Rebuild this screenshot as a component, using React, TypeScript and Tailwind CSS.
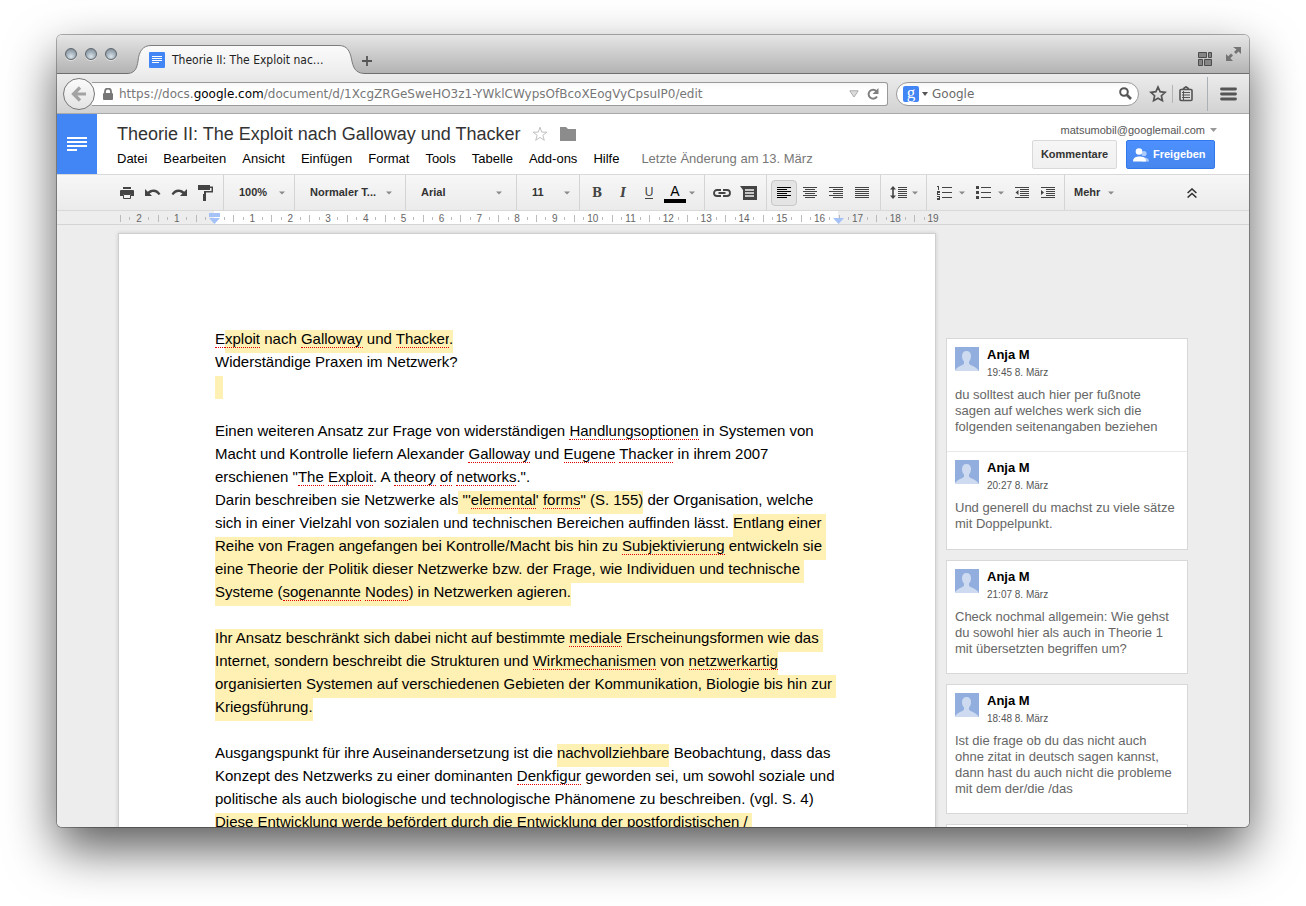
import React from "react";

type Run = { t: string; hl?: boolean; sp?: boolean };

const p = (t: string): Run => ({ t });
const s = (t: string): Run => ({ t, sp: true });
const h = (t: string): Run => ({ t, hl: true });
const hs = (t: string): Run => ({ t, hl: true, sp: true });

const documentLines: Run[][] = [
  [s("E"), hs("xploit"), h(" nach "), hs("Galloway"), h(" und "), hs("Thacker"), h(".")],
  [p("Widerständige Praxen im Netzwerk?")],
  [h("  ")],
  [],
  [p("Einen weiteren Ansatz zur Frage von widerständigen "), s("Handlungsoptionen"), p(" in Systemen von")],
  [p("Macht und Kontrolle liefern Alexander "), s("Galloway"), p(" und "), s("Eugene"), p(" "), s("Thacker"), p(" in ihrem 2007")],
  [p('erschienen "'), s("The"), p(" "), s("Exploit"), p(". A "), s("theory"), p(" "), s("of"), p(" "), s("networks"), p('.".')],
  [p("Darin beschreiben sie Netzwerke als"), h(' "\''), hs("elemental"), h("' "), hs("forms"), h('" (S. 155)'), p(" der Organisation, welche")],
  [p("sich in einer Vielzahl von sozialen und technischen Bereichen auffinden lässt. "), h("Entlang einer ")],
  [h("Reihe von Fragen angefangen bei Kontrolle/Macht bis hin zu "), hs("Subjektivierung"), h(" entwickeln sie ")],
  [h("eine Theorie der Politik dieser Netzwerke bzw. der Frage, wie Individuen und technische ")],
  [h("Systeme ("), hs("sogenannte"), h(" "), hs("Nodes"), h(") in Netzwerken agieren.")],
  [],
  [h("Ihr Ansatz beschränkt sich dabei nicht auf bestimmte "), hs("mediale"), h(" Erscheinungsformen wie das ")],
  [h("Internet, sondern beschreibt die Strukturen und "), hs("Wirkmechanismen"), h(" von "), hs("netzwerkartig")],
  [h("organisierten Systemen auf verschiedenen Gebieten der Kommunikation, Biologie bis hin zur ")],
  [h("Kriegsführung.")],
  [],
  [p("Ausgangspunkt für ihre Auseinandersetzung ist die "), h("nachvollziehbare"), p(" Beobachtung, dass das")],
  [p("Konzept des Netzwerks zu einer dominanten "), s("Denkfigur"), p(" geworden sei, um sowohl soziale und")],
  [p("politische als auch biologische und technologische Phänomene zu beschreiben. (vgl. S. 4)")],
  [h("Diese Entwicklung werde befördert durch die Entwicklung der postfordistischen / ")],
];

const threads = [
  [
    { time: "19:45 8. März", lines: ["du solltest auch hier per fußnote", "sagen auf welches werk sich die", "folgenden seitenangaben beziehen"] },
    { time: "20:27 8. März", lines: ["Und generell du machst zu viele sätze", "mit Doppelpunkt."] },
  ],
  [{ time: "21:07 8. März", lines: ["Check nochmal allgemein: Wie gehst", "du sowohl hier als auch in Theorie 1", "mit übersetzten begriffen um?"] }],
  [{ time: "18:48 8. März", lines: ["Ist die frage ob du das nicht auch", "ohne zitat in deutsch sagen kannst,", "dann hast du auch nicht die probleme", "mit dem der/die /das"] }],
];

const menus = ["Datei", "Bearbeiten", "Ansicht", "Einfügen", "Format", "Tools", "Tabelle", "Add-ons", "Hilfe"];

function Caret() {
  return (
    <svg className="h-[4px] w-[6px] shrink-0" viewBox="0 0 6 4" aria-hidden="true">
      <path d="M0 .5h6L3 3.5z" fill="#8a8a8a" />
    </svg>
  );
}

function Tool({ label, active, children }: { label: string; active?: boolean; children: React.ReactNode }) {
  return (
    <button
      type="button"
      aria-label={label}
      className={
        active
          ? "flex h-[26px] w-[26px] shrink-0 items-center justify-center rounded-sm border border-[#c8c8c8] bg-[#e4e4e4] text-black"
          : "flex h-[26px] w-[26px] shrink-0 items-center justify-center text-[#444]"
      }
    >
      {children}
    </button>
  );
}

function MenuCaret({ label }: { label: string }) {
  return (
    <button type="button" aria-label={label} className="flex h-[26px] w-2 shrink-0 items-center justify-center">
      <Caret />
    </button>
  );
}

function Pick({ label, value, className }: { label: string; value: string; className: string }) {
  return (
    <label className={`flex shrink-0 items-center border-r border-[#d4d4d4] pl-[15px] ${className}`}>
      <select
        aria-label={label}
        className="min-w-0 flex-1 appearance-none bg-transparent text-[11px] font-bold text-[#333] outline-none"
      >
        <option>{value}</option>
      </select>
      <Caret />
    </label>
  );
}

function Bars({ rows }: { rows: [number, number][] }) {
  return (
    <svg width="14" height="12" viewBox="0 0 14 12" aria-hidden="true" shapeRendering="crispEdges">
      {rows.map(([x, w], i) => (
        <rect key={i} x={x} y={i * 2} width={w} height="1" fill="currentColor" />
      ))}
    </svg>
  );
}

function TitleBar() {
  return (
    <div className="flex h-[39px] shrink-0 items-start border-b border-[#6e6e6e] bg-linear-to-b from-[#e6e6e6] to-[#b3b3b3]">
      <div className="flex gap-2 pt-[13px] pl-2">
        {["Schließen", "Minimieren", "Zoomen"].map((name) => (
          <button
            key={name}
            type="button"
            aria-label={name}
            className="h-3 w-3 rounded-full border border-[#5f676e] bg-[radial-gradient(circle_at_50%_75%,#dbe4ea_0%,#a3b0ba_50%,#74808a_100%)] shadow-[0_1px_0_rgba(255,255,255,0.5)]"
          />
        ))}
      </div>
      <div className="relative mt-[10px] ml-[11px] flex h-[30px] w-[236px] items-center pl-[21px]">
        <svg className="absolute inset-0" width="236" height="30" viewBox="0 0 236 30" aria-hidden="true">
          <defs>
            <linearGradient id="tab" x1="0" y1="0" x2="0" y2="1">
              <stop offset="0" stopColor="#fbfbfb" />
              <stop offset="1" stopColor="#ececec" />
            </linearGradient>
          </defs>
          <path
            d="M0 30V28.500C7 28 9 23 10 16C11 6 15 .5 23 .5H211C219 .5 222 6 223.500 14C225 22 227 28 236 28.500V30Z"
            fill="url(#tab)"
          />
          <path
            d="M0 28.500C7 28 9 23 10 16C11 6 15 .5 23 .5H211C219 .5 222 6 223.500 14C225 22 227 28 236 28.500"
            fill="none"
            stroke="#7c7c7c"
          />
        </svg>
        <svg className="relative" width="16" height="16" viewBox="0 0 16 16" aria-hidden="true">
          <rect width="16" height="16" rx="1" fill="#4285f4" />
          <path d="M3 4.500h10M3 6.500h10M3 8.500h10M3 10.500h7" stroke="#fff" />
        </svg>
        <span className="relative ml-[7px] font-['DejaVu_Sans_Condensed','DejaVu_Sans',sans-serif] text-[12px] font-stretch-normal text-[#222]">
          Theorie II: The Exploit nac…
        </span>
      </div>
      <button type="button" aria-label="Neuer Tab" className="mt-5 -ml-[3px] text-[#555]">
        <svg width="12" height="12" viewBox="0 0 12 12">
          <path d="M6 1v10M1 6h10" stroke="currentColor" strokeWidth="1.800" />
        </svg>
      </button>
      <div className="ml-auto flex items-start gap-[14px] pt-3 pr-2">
        <button type="button" aria-label="Tab-Gruppen" className="mt-[5px]">
          <svg width="14" height="14" viewBox="0 0 14 14" fill="#858585" stroke="#4c4c4c">
            <path d="M.5.500h8v5h-8zM10.500.500h3v5h-3zM.5 7.500h4v6h-4zM6.500 7.500h7v6h-7z" />
          </svg>
        </button>
        <button type="button" aria-label="Vollbild">
          <svg width="15" height="15" viewBox="0 0 15 15" fill="#747474">
            <path d="M7 0h8v7l-2.500-2.500L10 7 8 5l2.500-2.500zM0 7l2.200 2.200L5 6.500l2 2-2.700 2.800L7 14H0z" />
          </svg>
        </button>
      </div>
    </div>
  );
}

function NavigationBar() {
  return (
    <div className="flex h-10 shrink-0 items-center border-b border-[#a9a9a9] bg-linear-to-b from-[#ececec] to-[#d2d2d2] font-['DejaVu_Sans',sans-serif]">
      <button
        type="button"
        aria-label="Zurück"
        className="relative ml-[6px] flex h-8 w-8 shrink-0 items-center justify-center rounded-full border border-[#777] bg-linear-to-b from-[#fbfbfb] to-[#e3e3e3]"
      >
        <svg width="16" height="16" viewBox="0 0 16 16" fill="none" stroke="#a3a3a3" strokeWidth="3.200">
          <path d="M9 1.500L2.500 8 9 14.500M3 8h12" />
        </svg>
      </button>
      <div className="-ml-[3px] flex h-6 min-w-0 flex-1 items-center rounded-r-[3px] border border-l-0 border-[#999] bg-linear-to-b from-[#f7f7f7] to-white to-30% pl-[11px]">
        <svg width="10" height="12" viewBox="0 0 10 12" className="shrink-0" aria-hidden="true">
          <path d="M2 6V3.500a3 3 0 0 1 6 0V6" fill="none" stroke="#777" strokeWidth="1.800" />
          <rect y="5" width="10" height="7" rx="1" fill="#777" />
        </svg>
        <div
          role="textbox"
          aria-label="Adresse"
          contentEditable
          suppressContentEditableWarning
          spellCheck={false}
          className="ml-[6px] min-w-0 flex-1 overflow-hidden text-[12px] whitespace-nowrap text-[#777] outline-none"
        >
          https://docs.<span className="text-black">google.com</span>
          /document/d/1XcgZRGeSweHO3z1-YWklCWypsOfBcoXEogVyCpsuIP0/edit
        </div>
        <button type="button" aria-label="Verlauf" className="mr-2">
          <svg width="10" height="8" viewBox="0 0 10 8">
            <path d="M.8.800h8.400L5 7z" fill="#ddd" stroke="#aaa" />
          </svg>
        </button>
        <button type="button" aria-label="Neu laden" className="mr-2">
          <svg width="12" height="12" viewBox="0 0 12 12">
            <path d="M9.500 3.200A4.500 4.500 0 1 0 10 8.500" fill="none" stroke="#808080" strokeWidth="2" />
            <path d="M11.500 0v6h-6z" fill="#808080" />
          </svg>
        </button>
      </div>
      <div className="ml-2 flex h-6 w-[243px] shrink-0 items-center rounded-full border border-[#999] bg-linear-to-b from-[#f7f7f7] to-white to-30% px-[6px]">
        <span className="flex h-4 w-4 items-center justify-center rounded-[2px] bg-[#4285f4] pb-[3px] font-['Liberation_Serif',serif] text-[17px] leading-none text-white">
          g
        </span>
        <svg width="6" height="4" viewBox="0 0 6 4" className="mr-[4px] ml-[3px]" aria-hidden="true">
          <path d="M0 0h6L3 4z" fill="#555" />
        </svg>
        <input
          aria-label="Suche"
          placeholder="Google"
          className="min-w-0 flex-1 bg-transparent text-[12px] outline-none placeholder:text-[#6b6b6b]"
        />
        <button type="button" aria-label="Suchen">
          <svg width="13" height="13" viewBox="0 0 13 13" fill="none" stroke="#555">
            <circle cx="5" cy="5" r="3.800" strokeWidth="2" />
            <path d="M8 8l4 4" strokeWidth="2.600" />
          </svg>
        </button>
      </div>
      <button type="button" aria-label="Lesezeichen" className="ml-[10px]">
        <svg width="18" height="18" viewBox="0 0 18 18">
          <path d="M9 2l2.100 4.700 5 .6-3.700 3.400 1 5L9 13.200l-4.400 2.500 1-5L1.900 7.300l5-.6z" fill="none" stroke="#555" strokeWidth="1.700" />
        </svg>
      </button>
      <span className="mx-[5px] h-[18px] w-px bg-[#b4b4b4]" />
      <button type="button" aria-label="Leseliste">
        <svg width="16" height="16" viewBox="0 0 16 16" fill="none" stroke="#555">
          <path d="M5 3L8 .8 11 3" strokeWidth="1.600" />
          <rect x="2" y="3.500" width="12" height="11" rx="1" strokeWidth="1.600" />
          <path d="M4 6.500h8M4 9h8M4 11.500h8M5.500 5v9" strokeWidth="1" />
        </svg>
      </button>
      <span className="mr-3 ml-[13px] h-[34px] w-px bg-[#a9b0b6]" />
      <button type="button" aria-label="Menü" className="mr-3">
        <svg width="17" height="14" viewBox="0 0 17 14">
          <path d="M1.500 2h14M1.500 7h14M1.500 12h14" stroke="#555" strokeWidth="2.800" strokeLinecap="round" />
        </svg>
      </button>
    </div>
  );
}

function DocumentHeader() {
  return (
    <header className="flex h-[60px] shrink-0 bg-white">
      <a href="#start" aria-label="Docs-Startseite" className="flex w-10 shrink-0 items-center justify-center bg-[#4285f4]">
        <svg width="20" height="14" viewBox="0 0 20 14" fill="#fff" shapeRendering="crispEdges">
          <path d="M0 0h20v2H0zM0 4h20v2H0zM0 8h20v2H0zM0 12h10v2H0z" />
        </svg>
      </a>
      <div className="min-w-0 flex-1 pt-2 pl-5">
        <div className="flex h-6 items-center">
          <h1 className="text-lg leading-6 whitespace-nowrap text-[#333]">Theorie II: The Exploit nach Galloway und Thacker</h1>
          <button type="button" aria-label="Markieren" className="ml-[11px]">
            <svg width="16" height="16" viewBox="0 0 16 16">
              <path d="M8 1.200l1.700 4.900 5.300.1-4.200 3.100 1.500 5L8 11.400 3.700 14.300l1.500-5L1 6.200l5.300-.1z" fill="none" stroke="#c0c0c0" />
            </svg>
          </button>
          <button type="button" aria-label="Ordner" className="ml-3">
            <svg width="16" height="14" viewBox="0 0 16 14">
              <path d="M0 0h6l2 2h8v12H0z" fill="#8c8c8c" />
            </svg>
          </button>
        </div>
        <nav className="flex items-center gap-4 pt-1 text-[13px] leading-[18px] whitespace-nowrap text-black">
          {menus.map((m) => (
            <button key={m} type="button">{m}</button>
          ))}
          <a href="#verlauf" className="ml-[6px] text-[#777]">Letzte Änderung am 13. März</a>
        </nav>
      </div>
      <div className="flex flex-col items-end pt-2 pr-[34px]">
        <button type="button" className="flex items-center gap-[5px] pb-[2px] text-[11px] leading-4 text-[#555]">
          matsumobil@googlemail.com
          <svg width="7" height="4" viewBox="0 0 7 4" className="-mr-[2px]" aria-hidden="true">
            <path d="M0 0h7L3.500 4z" fill="#999" />
          </svg>
        </button>
        <div className="flex gap-[9px] text-[11px] font-bold">
          <button type="button" className="h-[29px] w-[85px] rounded-[2px] border border-[#d9d9d9] bg-linear-to-b from-[#f6f6f6] to-[#f0f0f0] text-[#333]">
            Kommentare
          </button>
          <button type="button" className="flex h-[29px] w-[89px] items-center gap-[3px] rounded-[2px] border border-[#3079ed] bg-linear-to-b from-[#4d90fe] to-[#4787ed] pl-[6px] text-white">
            <svg width="17" height="14" viewBox="0 0 17 14" fill="#fff" aria-hidden="true">
              <g opacity=".55">
                <circle cx="11" cy="5.500" r="2.600" />
                <path d="M9 9.200c4 0 7 1 7 4.300H9z" />
              </g>
              <circle cx="6" cy="3.500" r="3.300" />
              <path d="M0 13.500C0 9.500 3 8.500 6.500 8.500S13 9.500 13 13.500z" />
            </svg>
            Freigeben
          </button>
        </div>
      </div>
    </header>
  );
}

function Toolbar() {
  const group = "flex shrink-0 items-center border-r border-[#d4d4d4]";
  return (
    <div className="flex h-[37px] shrink-0 border-y border-[#d9d9d9] bg-linear-to-b from-[#f7f7f7] to-[#ebebeb]">
      <div className={`${group} w-[167px] pl-[57px]`}>
        <Tool label="Drucken">
          <svg width="14" height="12" viewBox="0 0 14 12" fill="currentColor">
            <path d="M3 0h8v2H3zM1 3h12q1 0 1 1v5h-3V7H3v2H0V4q0-1 1-1z" />
            <path d="M3.500 7.500h7v4h-7z" fill="#f3f3f3" stroke="currentColor" />
          </svg>
        </Tool>
        <Tool label="Rückgängig">
          <svg width="16" height="8" viewBox="0 0 16 8" fill="currentColor">
            <path d="M0 0v7h7L4.600 4.600C7 2.200 11 2.200 13.500 6L15.500 5C12.500 -.5 6.500 -.5 2.800 2.800z" />
          </svg>
        </Tool>
        <Tool label="Wiederholen">
          <svg width="16" height="8" viewBox="0 0 16 8" fill="currentColor">
            <path d="M16 0v7H9l2.400-2.400C9 2.200 5 2.200 2.500 6L.5 5C3.500 -.5 9.500 -.5 13.200 2.800z" />
          </svg>
        </Tool>
        <Tool label="Format übertragen">
          <svg width="15" height="16" viewBox="0 0 15 16" fill="currentColor">
            <path d="M0 0h12v5H0zM12 1.500h3v6H8V9H6V6h7.500V3H12zM5 9h3v7H5z" />
          </svg>
        </Tool>
      </div>
      <Pick label="Zoom" value="100%" className="w-[71px] pr-[9px]" />
      <Pick label="Formatvorlage" value="Normaler T..." className="w-[111px] pr-[13px]" />
      <Pick label="Schriftart" value="Arial" className="w-[111px] pr-[14px]" />
      <Pick label="Schriftgröße" value="11" className="w-[63px] pr-[9px]" />
      <div className={`${group} w-[125px] pl-1`}>
        <Tool label="Fett">
          <span className="font-['DejaVu_Serif',serif] text-[12px] font-bold">B</span>
        </Tool>
        <Tool label="Kursiv">
          <span className="font-['DejaVu_Serif',serif] text-[12px] font-bold italic">I</span>
        </Tool>
        <Tool label="Unterstrichen">
          <span className="border-b border-current text-[12px] leading-3">U</span>
        </Tool>
        <Tool label="Textfarbe">
          <span className="flex w-[22px] justify-center border-b-4 border-black pt-[2px] pb-px text-[14px] leading-[14px] text-black">A</span>
        </Tool>
        <MenuCaret label="Textfarbe auswählen" />
      </div>
      <div className={`${group} w-[62px] pl-1`}>
        <Tool label="Link einfügen">
          <svg width="18" height="8" viewBox="0 0 18 8" fill="none" stroke="currentColor" strokeWidth="1.800">
            <path d="M8 1H4a3 3 0 0 0 0 6h4M10 1h4a3 3 0 0 1 0 6h-4M5.500 4h7" />
          </svg>
        </Tool>
        <Tool label="Kommentar einfügen">
          <svg width="17" height="14" viewBox="0 0 17 14">
            <path d="M0 0h17v14H3V4z" fill="currentColor" />
            <path d="M5 4h9M5 7h9M5 10h9" stroke="#f2f2f2" strokeWidth="1.400" />
          </svg>
        </Tool>
      </div>
      <div className={`${group} w-[114px] pl-1`}>
        <Tool label="Linksbündig" active>
          <Bars rows={[[0, 14], [0, 10], [0, 14], [0, 10], [0, 14], [0, 10]]} />
        </Tool>
        <Tool label="Zentriert">
          <Bars rows={[[0, 14], [2, 10], [0, 14], [2, 10], [0, 14], [2, 10]]} />
        </Tool>
        <Tool label="Rechtsbündig">
          <Bars rows={[[0, 14], [4, 10], [0, 14], [4, 10], [0, 14], [4, 10]]} />
        </Tool>
        <Tool label="Blocksatz">
          <Bars rows={[[0, 14], [0, 14], [0, 14], [0, 14], [0, 14], [0, 14]]} />
        </Tool>
      </div>
      <div className={`${group} w-[46px] pl-1`}>
        <Tool label="Zeilenabstand">
          <svg width="17" height="13" viewBox="0 0 17 13" fill="currentColor">
            <path d="M3 0L6 3.500H3.800V9.500H6L3 13 0 9.500H2.200V3.500H0z" />
            <path d="M8 1h9v1H8zM8 3h9v1H8zM8 5h9v1H8zM8 7h9v1H8zM8 9h9v1H8zM8 11h9v1H8z" />
          </svg>
        </Tool>
        <MenuCaret label="Zeilenabstand auswählen" />
      </div>
      <div className={`${group} w-[138px] pl-1`}>
        <Tool label="Nummerierte Liste">
          <svg width="15" height="14" viewBox="0 0 15 14" fill="none" stroke="currentColor" shapeRendering="crispEdges">
            <path d="M5 1.500h10M5 6.500h10M5 11.500h10M0 .5h1.500v3M0 5.500h2.500v1H.5v1.500h2.500M0 10.500h2.500v3H0M0 12h2" />
          </svg>
        </Tool>
        <span className="pr-1 pl-[1px]">
          <MenuCaret label="Nummerierung auswählen" />
        </span>
        <Tool label="Aufzählung">
          <svg width="15" height="13" viewBox="0 0 15 13" fill="currentColor">
            <path d="M0 0h3v3H0zM0 5h3v3H0zM0 10h3v3H0zM5 1h10v1H5zM5 6h10v1H5zM5 11h10v1H5z" />
          </svg>
        </Tool>
        <span className="pr-1 pl-[1px]">
          <MenuCaret label="Aufzählung auswählen" />
        </span>
        <Tool label="Einzug verkleinern">
          <svg width="14" height="11" viewBox="0 0 14 11" fill="currentColor">
            <path d="M0 0h14v1H0zM5 2h9v1H5zM5 4h9v1H5zM5 6h9v1H5zM5 8h9v1H5zM0 10h14v1H0zM3.500 3v5L.5 5.500z" />
          </svg>
        </Tool>
        <Tool label="Einzug vergrößern">
          <svg width="14" height="11" viewBox="0 0 14 11" fill="currentColor">
            <path d="M0 0h14v1H0zM5 2h9v1H5zM5 4h9v1H5zM5 6h9v1H5zM5 8h9v1H5zM0 10h14v1H0zM0 3v5l3-2.500z" />
          </svg>
        </Tool>
      </div>
      <button type="button" className="flex items-center gap-2 pl-[9px] text-[11px] font-bold text-[#333]">
        Mehr
        <Caret />
      </button>
      <button type="button" aria-label="Menüs ausblenden" className="mr-[52px] ml-auto text-[#333]">
        <svg width="10" height="10" viewBox="0 0 10 10" fill="none" stroke="currentColor" strokeWidth="1.600">
          <path d="M.6 5L5 1l4.400 4M.6 9.500L5 5.500l4.400 4" />
        </svg>
      </button>
    </div>
  );
}

function Ruler() {
  return (
    <div className="relative flex h-[14px] shrink-0 border-b border-[#d4d4d4] bg-[#ededed] text-[10px] leading-none text-[#666]">
      <div className="absolute top-0 bottom-0 left-[157px] w-[624px] bg-white" />
      <div className="relative ml-[63px] grid w-[832px] grid-cols-[repeat(22,1fr)] pt-[2px]">
        {Array.from({ length: 22 }, (_, i) => i - 2).map((n) => (
          <div key={n} className="grid grid-cols-4 items-center">
            <span className="h-[7px] w-px bg-[#bbb]" />
            <span className="h-[3px] w-px bg-[#bbb]" />
            <span className="flex w-0 justify-center">{n === 0 ? "" : Math.abs(n)}</span>
            {n < 19 && <span className="h-[3px] w-px bg-[#bbb]" />}
          </div>
        ))}
      </div>
      <svg className="absolute top-[2px] left-[152px]" width="11" height="11" viewBox="0 0 11 11" fill="#a4c2f7" aria-hidden="true">
        <path d="M0 0h11v4H0zM0 5h11L5.500 11z" />
      </svg>
      <svg className="absolute top-[7px] left-[776px]" width="11" height="6" viewBox="0 0 11 6" fill="#a4c2f7" aria-hidden="true">
        <path d="M0 0h11L5.500 6z" />
      </svg>
    </div>
  );
}

function Avatar() {
  return (
    <svg width="24" height="24" viewBox="0 0 24 24" className="shrink-0" aria-hidden="true">
      <rect width="24" height="24" fill="#92aede" />
      <path
        d="M11.500 4c3 0 4.500 2 4.500 5 0 2.500-.8 4.300-2 5.500v2c0 1.500 6 2.500 9.500 6.500V24H0v-1c3-4 9-5 9-6.500v-2C7.800 13.300 7 11.500 7 9c0-3 1.500-5 4.500-5z"
        fill="#cddaf0"
      />
    </svg>
  );
}

function Comments() {
  return (
    <aside className="mt-[113px] flex w-[242px] shrink-0 flex-col gap-[10px] self-start">
      {threads.map((thread, i) => (
        <section key={i} className="border border-[#d8d8d8] bg-white">
          {thread.map((c, j) => (
            <article key={c.time} className={j > 0 ? "border-t border-[#e8e8e8] px-2 pt-2 pb-[17px]" : "px-2 pt-2 pb-4"}>
              <div className="flex h-10 gap-2">
                <Avatar />
                <div>
                  <div className="text-[13px] leading-4 font-bold text-black">Anja M</div>
                  <div className="pt-[2px] text-[10px] leading-4 text-[#555]">{c.time}</div>
                </div>
              </div>
              <p className="text-[13px] leading-4 whitespace-nowrap text-[#666]">
                {c.lines.map((line) => (
                  <span key={line} className="block">{line}</span>
                ))}
              </p>
            </article>
          ))}
        </section>
      ))}
      <section className="h-20 border border-[#d8d8d8] bg-white" />
    </aside>
  );
}

function Page() {
  return (
    <main className="ml-[61px] w-[818px] shrink-0 border border-[#cfcfcf] bg-white px-24 pt-[93px] pb-24 text-[15px] leading-[23px] whitespace-pre text-black shadow-[0_0_4px_rgba(0,0,0,0.15)]">
      {documentLines.map((line, i) => (
        <div key={i} className="h-[23px]">
          {line.map((r, j) => (
            <span key={j} className={r.hl ? "bg-[#fff0b3] pb-[6px]" : ""}>
              <span className={r.sp ? "border-b border-dotted border-[#e00000]" : ""}>{r.t}</span>
            </span>
          ))}
        </div>
      ))}
    </main>
  );
}

export default function App() {
  return (
    <div className="flex h-screen flex-col overflow-hidden bg-white px-[57px] pt-[35px] pb-[79px] font-['Liberation_Sans',Arial,sans-serif]">
      <div className="flex min-h-0 flex-1 flex-col rounded-[5px] shadow-[0_0_0_1px_rgba(0,0,0,0.3),0_22px_50px_rgba(0,0,0,0.65)]">
        <div className="flex min-h-0 flex-1 flex-col overflow-hidden rounded-[5px]">
          <TitleBar />
          <NavigationBar />
          <DocumentHeader />
          <Toolbar />
          <Ruler />
          <div className="flex min-h-0 flex-1 items-start gap-[10px] overflow-hidden bg-[#ededed]">
            <div className="flex shrink-0 pt-2">
              <Page />
            </div>
            <Comments />
          </div>
        </div>
      </div>
    </div>
  );
}
